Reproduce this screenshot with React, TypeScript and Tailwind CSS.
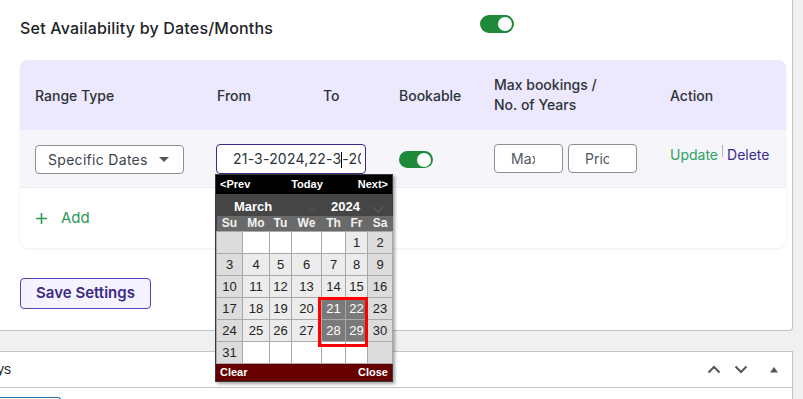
import React from "react";

const weeks: number[][] = [
  [0, 0, 0, 0, 0, 1, 2],
  [3, 4, 5, 6, 7, 8, 9],
  [10, 11, 12, 13, 14, 15, 16],
  [17, 18, 19, 20, 21, 22, 23],
  [24, 25, 26, 27, 28, 29, 30],
  [31, 0, 0, 0, 0, 0, 0],
];
const dayNames = ["Su", "Mo", "Tu", "We", "Th", "Fr", "Sa"];
const picked = [21, 22, 28, 29];

const Toggle: React.FC<{ small?: boolean }> = ({ small }) => (
  <div
    className={
      small
        ? "w-[34px] h-[17px] rounded-full bg-[#1e8a38] flex items-center justify-end pr-[2px]"
        : "w-[34px] h-[18px] rounded-full bg-[#1e8a38] flex items-center justify-end pr-[2px]"
    }
  >
    <div className="w-[14px] h-[14px] rounded-full bg-white" />
  </div>
);

const cellClass = (day: number, col: number) => {
  const weekend = col === 0 || col === 6;
  if (picked.includes(day)) return "bg-[#7a7a7a] text-white";
  if (day === 0) return weekend ? "bg-[#dcdcdc]" : "bg-white";
  return weekend ? "bg-[#dcdcdc] text-[#222]" : "bg-[#ececec] text-[#222]";
};

const Chevron = () => (
  <svg width="12" height="7" viewBox="0 0 12 7" className="mt-[4px]">
    <path d="M1 1l5 5 5-5" stroke="#5c5c5c" strokeWidth="1.2" fill="none" />
  </svg>
);

const Calendar = () => (
  <div className="absolute left-[-1px] top-[30px] w-[178px] border border-[#3a3a3a] bg-[#444] shadow-[2px_2px_3px_rgba(0,0,0,0.35)] z-10 font-['Liberation_Sans',Arial,sans-serif]">
    <div className="h-[19px] bg-black flex items-center justify-between px-[4px] pt-[1px] text-[11px] font-bold text-white">
      <span>&lt;Prev</span>
      <span className="ml-[6px]">Today</span>
      <span>Next&gt;</span>
    </div>
    <div className="h-[22px] bg-[#454545] flex items-center text-[13px] font-bold text-white pt-[5px]">
      <div className="w-[100px] flex items-center pl-[18px] gap-[36px]">
        <span>March</span>
        <Chevron />
      </div>
      <div className="flex items-center pl-[15px] gap-[12px]">
        <span>2024</span>
        <Chevron />
      </div>
    </div>
    <table className="table-fixed border-collapse w-[176px] text-[13px]">
      <colgroup>
        <col className="w-[26px]" />
        <col className="w-[27px]" />
        <col className="w-[22px]" />
        <col className="w-[30px]" />
        <col className="w-[24px]" />
        <col className="w-[22px]" />
        <col className="w-[25px]" />
      </colgroup>
      <thead>
        <tr className="h-[16px] bg-[#6a6a6a]">
          {dayNames.map((d) => (
            <th key={d} className="p-0 text-center font-bold text-[12px] text-[#f2f2f2] leading-[14px]">
              {d}
            </th>
          ))}
        </tr>
      </thead>
      <tbody>
        {weeks.map((week, wi) => (
          <tr key={wi} className="h-[22px]">
            {week.map((day, ci) => (
              <td key={ci} className={"p-0 text-center border border-[#a9a9a9] " + cellClass(day, ci)}>
                {day > 0 ? day : ""}
              </td>
            ))}
          </tr>
        ))}
      </tbody>
    </table>
    <div className="h-[17px] bg-[#660000] flex items-center justify-between px-[4px] text-[11px] font-bold text-white">
      <span>Clear</span>
      <span>Close</span>
    </div>
    <div className="absolute left-[102px] top-[122px] w-[50px] h-[50px] border-[3px] border-[#ff0000]" />
  </div>
);

export default function App() {
  return (
    <div className="w-[803px] h-[399px] overflow-hidden bg-[#f0f0f1] font-['Inter',sans-serif]">
      <div className="w-[793px]">
        <div className="h-[331px] bg-white border-r border-b border-[#c3c4c7] rounded-br-[4px]">
          <div className="flex pt-[14px] pl-[20px] h-[40px]">
            <div className="w-[460px] h-[27px] flex items-center text-[16px] font-medium tracking-[0.2px] text-[#1d2327]">
              Set Availability by Dates/Months
            </div>
            <div className="pt-[1px]">
              <Toggle />
            </div>
          </div>

          <div className="ml-[20px] mt-[20px] w-[766px] rounded-lg bg-white shadow-[0_1px_3px_rgba(0,0,0,0.07)]">
            <div className="h-[70px] rounded-t-lg bg-[#ece8fd] grid grid-cols-[182px_106px_76px_95px_176px_1fr] pl-[15px] items-center text-[14px] font-medium text-[#2c3338]">
              <div>Range Type</div>
              <div>From</div>
              <div>To</div>
              <div>Bookable</div>
              <div className="leading-[20px]">
                Max bookings /<br />
                No. of Years
              </div>
              <div>Action</div>
            </div>

            <div className="h-[58px] bg-[#f6f5fa] border-b border-[#ebebf0] grid grid-cols-[182px_182px_95px_176px_1fr] pl-[15px] items-center text-[14px]">
              <div className="w-[149px] h-[29px] mt-[1px] border border-[#8c8f94] rounded-[4px] bg-white flex items-center justify-between pl-[12px] pr-[14px] text-[#3c434a]">
                <span className="tracking-[0.3px]">Specific Dates</span>
                <span className="w-0 h-0 border-l-[5px] border-r-[5px] border-t-[5px] border-l-transparent border-r-transparent border-t-[#50575e]" />
              </div>
              <div className="relative ml-[-1px]">
                <div className="w-[150px] h-[30px] border border-[#3d2b8e] rounded-[4px] bg-white flex items-center pl-[16px] pr-[4px]">
                  <div className="overflow-hidden whitespace-nowrap text-[#2c3338] tracking-[0.2px]">
                    21-3-2024,22-3<span className="inline-block w-px h-[16px] bg-black align-middle" />-2024
                  </div>
                </div>
                <Calendar />
              </div>
              <div className="mt-[2px]">
                <Toggle small />
              </div>
              <div className="flex gap-[5px] text-[#50575e]">
                <div className="w-[69px] h-[29px] border border-[#8c8f94] rounded-[4px] bg-white pl-[16px] pr-[27px] flex items-center">
                  <div className="overflow-hidden whitespace-nowrap">Max bookings</div>
                </div>
                <div className="w-[69px] h-[29px] border border-[#8c8f94] rounded-[4px] bg-white pl-[16px] pr-[27px] flex items-center">
                  <div className="overflow-hidden whitespace-nowrap">Price</div>
                </div>
              </div>
              <div className="flex items-start mb-[8px]">
                <span className="text-[#2ea163]">Update</span>
                <span className="w-px h-[12px] bg-[#b4b4b4] mx-[4px] mt-[1px]" />
                <span className="text-[#3c2a8a]">Delete</span>
              </div>
            </div>

            <div className="h-[60px] flex items-center pl-[15px] gap-[13px] text-[#2e9a57]">
              <svg width="13" height="13" viewBox="0 0 13 13">
                <path d="M6.5 1v11M1 6.5h11" stroke="#2e9a57" strokeWidth="1.6" />
              </svg>
              <span className="text-[15px]">Add</span>
            </div>
          </div>

          <div className="ml-[20px] mt-[30px] w-[131px] h-[31px] border border-[#5b3fc0] rounded-[4px] bg-[#f5f3ff] flex items-center justify-center text-[15px] font-semibold text-[#3b2a85]">
            Save Settings
          </div>
        </div>

        <div className="h-[20px]" />

        <div className="bg-white border-t border-r border-[#c3c4c7] h-[48px]">
          <div className="h-[36px] border-b border-[#c3c4c7] flex items-center justify-between pr-[13px]">
            <div className="overflow-hidden w-[20px]">
              <span className="block ml-[-21px] text-[14px] text-[#1d2327] font-['Liberation_Sans',sans-serif]">Days</span>
            </div>
            <div className="flex items-center gap-[13px]">
              <svg width="14" height="9" viewBox="0 0 14 9">
                <path d="M1.5 7.5L7 2l5.5 5.5" stroke="#50575e" strokeWidth="2" fill="none" />
              </svg>
              <svg width="14" height="9" viewBox="0 0 14 9">
                <path d="M1.5 1.5L7 7l5.5-5.5" stroke="#50575e" strokeWidth="2" fill="none" />
              </svg>
              <svg width="10" height="7" viewBox="0 0 10 7" className="ml-[8px]">
                <path d="M1 6.5L5 1l4 5.5z" fill="#50575e" />
              </svg>
            </div>
          </div>
          <div className="mt-[9px] w-[61px] h-[3px] border-t border-r border-[#2271b1] rounded-tr-[3px]" />
        </div>
      </div>
    </div>
  );
}
